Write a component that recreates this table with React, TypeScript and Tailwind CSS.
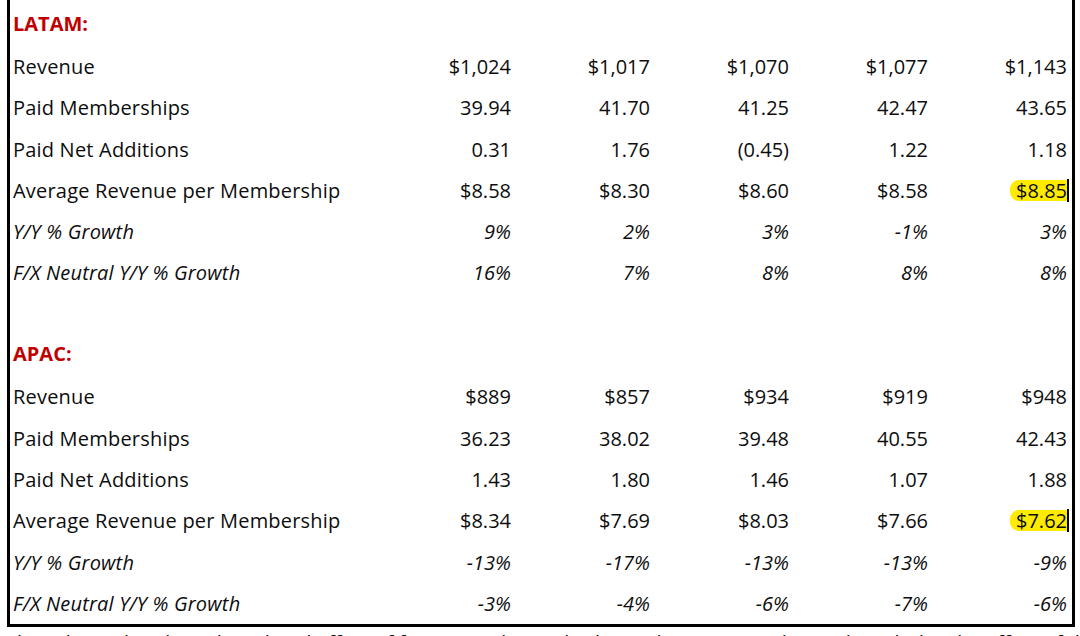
import React from "react";

type Row = { label: string; values: string[]; italic?: boolean; hl?: boolean };

const latam: Row[] = [
  { label: "Revenue", values: ["$1,024", "$1,017", "$1,070", "$1,077", "$1,143"] },
  { label: "Paid Memberships", values: ["39.94", "41.70", "41.25", "42.47", "43.65"] },
  { label: "Paid Net Additions", values: ["0.31", "1.76", "(0.45)", "1.22", "1.18"] },
  { label: "Average Revenue per Membership", values: ["$8.58", "$8.30", "$8.60", "$8.58", "$8.85"], hl: true },
  { label: "Y/Y % Growth", values: ["9%", "2%", "3%", "-1%", "3%"], italic: true },
  { label: "F/X Neutral Y/Y % Growth", values: ["16%", "7%", "8%", "8%", "8%"], italic: true },
];

const apac: Row[] = [
  { label: "Revenue", values: ["$889", "$857", "$934", "$919", "$948"] },
  { label: "Paid Memberships", values: ["36.23", "38.02", "39.48", "40.55", "42.43"] },
  { label: "Paid Net Additions", values: ["1.43", "1.80", "1.46", "1.07", "1.88"] },
  { label: "Average Revenue per Membership", values: ["$8.34", "$7.69", "$8.03", "$7.66", "$7.62"], hl: true },
  { label: "Y/Y % Growth", values: ["-13%", "-17%", "-13%", "-13%", "-9%"], italic: true },
  { label: "F/X Neutral Y/Y % Growth", values: ["-3%", "-4%", "-6%", "-7%", "-6%"], italic: true },
];

function DataRow({ row }: { row: Row }) {
  return (
    <div className={`grid grid-cols-[362px_139px_139px_139px_139px_139px] h-[41.3px] items-center ${row.italic ? "italic" : ""}`}>
      <div className="pl-[3px] tracking-[0.2px]">{row.label}</div>
      {row.values.map((v, i) => {
        const last = i === row.values.length - 1;
        return (
          <div key={i} className="text-right">
            {last && row.hl ? (
              <span className="relative inline-block bg-[#ffeb00] rounded-l-[9px] pl-[6px] leading-[21px]">
                {v}
                <span className="absolute right-[-2px] top-[-1px] w-[2px] h-[23px] bg-black" />
              </span>
            ) : (
              v
            )}
          </div>
        );
      })}
    </div>
  );
}

function Header({ text }: { text: string }) {
  return (
    <div className="h-[41.3px] flex items-center pl-[3px] pb-[4px] text-[#c00000] font-bold text-[20px]">
      {text}
    </div>
  );
}

export default function App() {
  return (
    <div
      className="w-[1080px] h-[636px] overflow-hidden bg-white text-[#0d0d0d] text-[20px]"
      style={{ fontFamily: '"Open Sans", "Liberation Sans", sans-serif' }}
    >
      <div className="ml-[7px] w-[1068px] border-l-[3px] border-r-[3px] border-b-[3px] border-black pt-[5px] pr-[1px]">
        <Header text="LATAM:" />
        {latam.map((r) => (
          <DataRow key={"l" + r.label} row={r} />
        ))}
        <div className="h-[41.3px]" />
        <Header text="APAC:" />
        {apac.map((r) => (
          <DataRow key={"a" + r.label} row={r} />
        ))}
      </div>
      <div className="pl-[14px] pt-[2px] whitespace-nowrap leading-[28px]">
        * Paid memberships the related effect of foreign exchange hedging; the F/X neutral growth excludes the effect of the local currency
      </div>
    </div>
  );
}
